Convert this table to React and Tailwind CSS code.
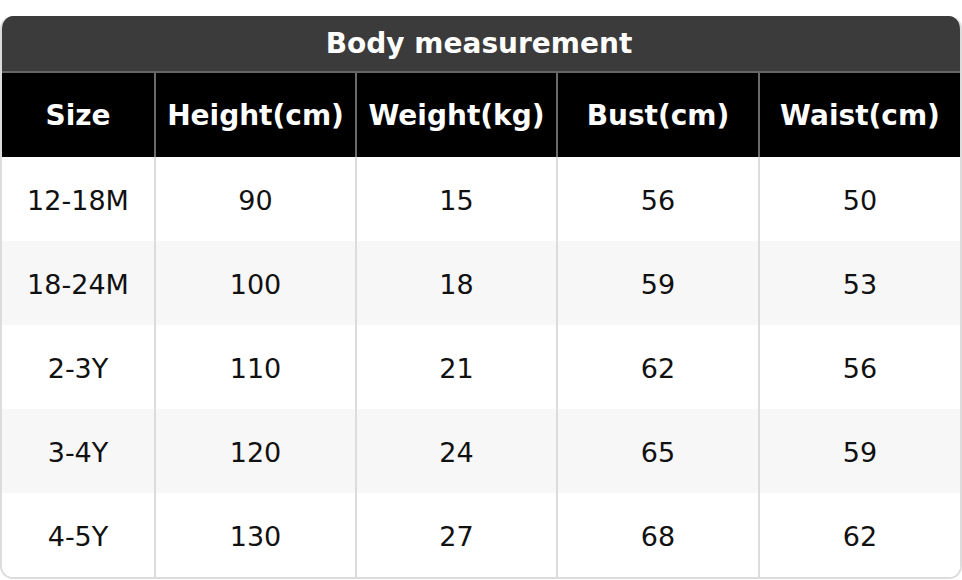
import React from "react";

const headers = ["Size", "Height(cm)", "Weight(kg)", "Bust(cm)", "Waist(cm)"];
const rows = [
  ["12-18M", "90", "15", "56", "50"],
  ["18-24M", "100", "18", "59", "53"],
  ["2-3Y", "110", "21", "62", "56"],
  ["3-4Y", "120", "24", "65", "59"],
  ["4-5Y", "130", "27", "68", "62"],
];

export default function App() {
  return (
    <div
      className="w-[962px] h-[580px] bg-white pt-4"
      style={{ fontFamily: '"DejaVu Sans", Verdana, sans-serif' }}
    >
      <div className="rounded-[13px] overflow-hidden border-x-2 border-b-2 border-[#dcdcdc]">
        <div className="h-[57px] bg-[#3b3b3b] border-b-2 border-[#666666] flex items-center justify-center text-white font-bold text-[28px] pr-1">
          Body measurement
        </div>
        <div className="grid grid-cols-[154px_201px_201px_202px_1fr] bg-black">
          {headers.map((h, i) => (
            <div
              key={h}
              className={`h-[84px] pt-[2px] flex items-center justify-center text-white font-bold text-[28px] ${
                i < 4 ? "border-r-2 border-[#6a6a6a]" : ""
              }`}
            >
              {h}
            </div>
          ))}
        </div>
        {rows.map((r, ri) => (
          <div
            key={ri}
            className={`grid grid-cols-[154px_201px_201px_202px_1fr] ${
              ri % 2 === 1 ? "bg-[#f7f7f7]" : "bg-white"
            }`}
          >
            {r.map((c, ci) => (
              <div
                key={ci}
                className={`h-[84px] pt-1 flex items-center justify-center text-[#111111] text-[27px] ${
                  ci < 4 ? "border-r-2 border-[#dcdcdc]" : ""
                }`}
              >
                {c}
              </div>
            ))}
          </div>
        ))}
      </div>
    </div>
  );
}
